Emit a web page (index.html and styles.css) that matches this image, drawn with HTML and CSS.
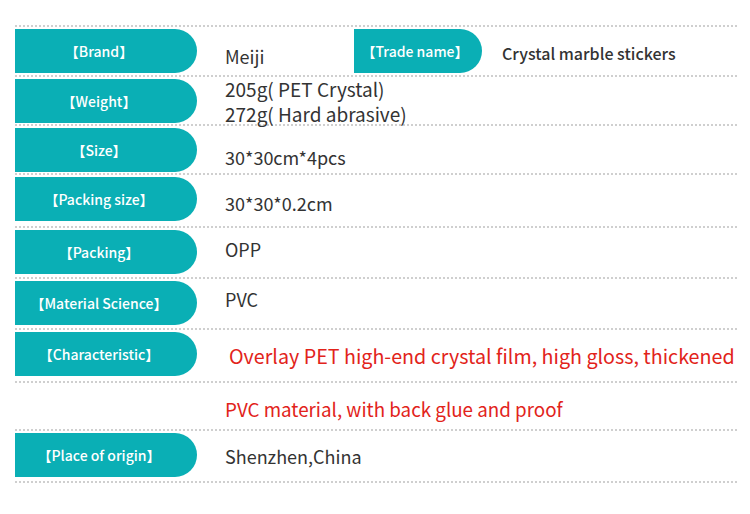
FILE: index.html
```html
<!DOCTYPE html>
<html lang="en">
<head>
<meta charset="utf-8">
<title>Product specifications</title>
<link rel="stylesheet" href="styles.css">
</head>
<body>
<div class="spec">
  <div class="row h50">
    <div class="pill">【Brand】</div>
    <div class="val v-brand">Meiji</div>
    <div class="pill pill-trade">【Trade name】</div>
    <div class="trade-val">Crystal marble stickers</div>
  </div>
  <div class="row h49">
    <div class="pill">【Weight】</div>
    <div class="val v-weight">205g( PET Crystal)<br>272g( Hard abrasive)</div>
  </div>
  <div class="row h49">
    <div class="pill">【Size】</div>
    <div class="val v-size">30*30cm*4pcs</div>
  </div>
  <div class="row h53">
    <div class="pill">【Packing size】</div>
    <div class="val v-psize">30*30*0.2cm</div>
  </div>
  <div class="row h51">
    <div class="pill">【Packing】</div>
    <div class="val v-packing">OPP</div>
  </div>
  <div class="row h51">
    <div class="pill">【Material Science】</div>
    <div class="val v-material">PVC</div>
  </div>
  <div class="row h53">
    <div class="pill">【Characteristic】</div>
    <div class="val red v-char">Overlay PET high-end crystal film, high gloss, thickened</div>
  </div>
  <div class="row h48">
    <div class="pill-space"></div>
    <div class="val red v-char2">PVC material, with back glue and proof</div>
  </div>
  <div class="row last">
    <div class="pill">【Place of origin】</div>
    <div class="val v-origin">Shenzhen,China</div>
  </div>
</div>
</body>
</html>
```

FILE: styles.css
```css
* { box-sizing: border-box; }
html, body {
  margin: 0;
  padding: 0;
  background: #ffffff;
}
body {
  font-family: "Noto Sans CJK SC", "Noto Sans", sans-serif;
  color: #333333;
}
.spec {
  width: 722px;
  margin-left: 15px;
  padding-top: 25px;
}
.row {
  display: flex;
  align-items: flex-start;
  border-top: 2px dotted #cfcfcf;
  padding-top: 2px;
}
.row.last {
  height: 54px;
  border-bottom: 2px dotted #cfcfcf;
}
.h48 { height: 48px; }
.h49 { height: 49px; }
.h50 { height: 50px; }
.h51 { height: 51px; }
.h52 { height: 52px; }
.h53 { height: 53px; }

.pill {
  flex: 0 0 182px;
  width: 182px;
  height: 44px;
  background: #0aafb5;
  border-radius: 0 22px 22px 0;
  color: #ffffff;
  font-size: 14px;
  font-weight: 500;
  display: flex;
  align-items: center;
  justify-content: center;
  padding-right: 14px;
  white-space: nowrap;
}
.pill-space {
  flex: 0 0 182px;
}
.val {
  margin-left: 28px;
  font-size: 18px;
  line-height: 24px;
  white-space: pre;
}
.red {
  color: #e2231a;
}
.v-brand { padding-top: 15px; width: 129px; flex: 0 0 auto; }
.v-weight { margin-top: -3px; line-height: 25px; font-size: 19px; }
.v-size { padding-top: 17px; }
.v-psize { padding-top: 14px; }
.v-packing { padding-top: 7px; }
.v-material { padding-top: 6px; }
.v-char { padding-top: 12px; margin-left: 32px; font-size: 19.7px; }
.v-char2 { padding-top: 12px; font-size: 18.8px; }
.v-origin { padding-top: 11px; }

.pill-trade {
  flex: 0 0 128px;
  width: 128px;
  padding-right: 6px;
}
.trade-val {
  margin-left: 20px;
  padding-top: 12px;
  font-size: 16px;
  line-height: 24px;
  font-weight: 500;
  color: #333333;
  white-space: nowrap;
}
```
